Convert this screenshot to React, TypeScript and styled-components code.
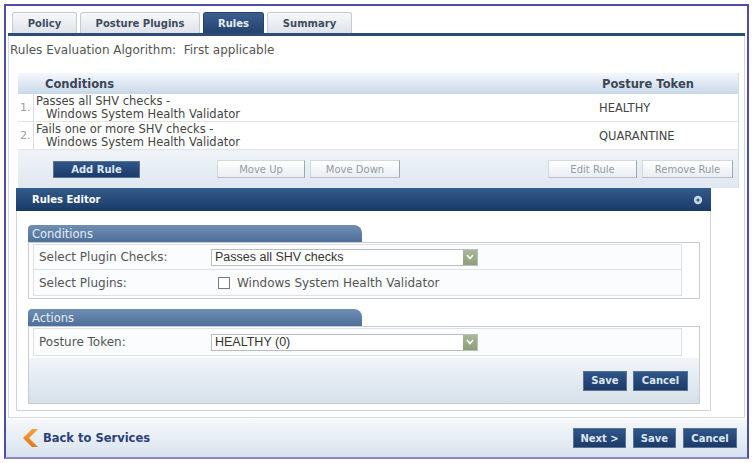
import styled, { createGlobalStyle } from "styled-components";

const GlobalStyle = createGlobalStyle`
  html, body {
    margin: 0;
    padding: 0;
    background: #ffffff;
  }
  body {
    font-family: "DejaVu Sans", Verdana, sans-serif;
    color: #444;
  }
`;

const Frame = styled.div`
  box-sizing: border-box;
  margin: 4px 0 0 4px;
  width: 745px;
  height: 455px;
  border: 2px solid #4e4eaa;
  border-bottom-color: #8a88c8;
  display: flex;
  flex-direction: column;
`;

const TabBar = styled.div`
  display: flex;
  gap: 3px;
  margin: 0 2px;
  padding: 6px 0 0 4px;
  border-bottom: 3px solid #2d4c76;
`;

const Tab = styled.div<{ $active?: boolean; $w: number }>`
  width: ${(p) => p.$w}px;
  height: 21px;
  box-sizing: border-box;
  display: flex;
  align-items: center;
  justify-content: center;
  font-size: 10px;
  font-weight: bold;
  border: 1px solid ${(p) => (p.$active ? "#24436d" : "#c6ccd4")};
  border-bottom: none;
  border-radius: 3px 3px 0 0;
  color: ${(p) => (p.$active ? "#e6eef8" : "#3e4c5e")};
  background: ${(p) =>
    p.$active
      ? "linear-gradient(#3a5f8f, #24436d)"
      : "linear-gradient(#f7f8fa, #dfe4ea)"};
`;

const Content = styled.div`
  margin: 0 2px;
  height: 382px;
  box-sizing: border-box;
  border: 1px solid #d3d9e0;
  border-top: none;
  padding: 6px 0 0 0;
  display: flex;
  flex-direction: column;
`;

const AlgoLine = styled.div`
  font-size: 12px;
  line-height: 16px;
  color: #555;
  padding-left: 1px;
`;

const Table = styled.div`
  margin: 15px 0 0 9px;
  width: 720px;
  border-right: 1px solid #d6dce4;
  display: flex;
  flex-direction: column;
`;

const HeadRow = styled.div`
  height: 21px;
  display: flex;
  align-items: center;
  background: linear-gradient(#f4f8fc, #c8d8ea);
  font-size: 11.5px;
  font-weight: bold;
  color: #3c4656;
`;

const HeadCell = styled.div<{ $w?: number }>`
  ${(p) => (p.$w ? `width: ${p.$w}px;` : "flex: 1;")}
  box-sizing: border-box;
`;

const Row = styled.div`
  height: 27px;
  display: flex;
  align-items: center;
  border-bottom: 1px solid #e1e5ea;
  font-size: 11.5px;
  color: #444;
`;

const NumCell = styled.div`
  width: 16px;
  height: 100%;
  box-sizing: border-box;
  border-right: 1px solid #d8dde3;
  display: flex;
  align-items: center;
  padding-left: 2px;
  font-size: 11px;
  color: #9aa0a8;
`;

const CondCell = styled.div`
  width: 563px;
  padding-left: 2px;
  line-height: 12.5px;
`;

const Indent = styled.div`
  padding-left: 10px;
`;

const TokenCell = styled.div`
  flex: 1;
  font-size: 11.5px;
`;

const ButtonBar = styled.div`
  height: 38px;
  display: flex;
  align-items: center;
  padding: 0 5px 0 35px;
  background: linear-gradient(#f0f4f8, #dfe7f0);
`;

const Spacer = styled.div`
  flex: 1;
`;

const LightButton = styled.div<{ $w: number; $ml?: number }>`
  width: ${(p) => p.$w}px;
  margin-left: ${(p) => p.$ml ?? 0}px;
  height: 18px;
  box-sizing: border-box;
  display: flex;
  align-items: center;
  justify-content: center;
  font-size: 10px;
  color: #959ba3;
  background: linear-gradient(#ffffff, #e9eef3);
  border: 1px solid #d2d8de;
  border-right-color: #9ea6ae;
  border-bottom-color: #b4bcc4;
`;

const DarkButton = styled.div<{ $w: number; $h?: number; $ml?: number }>`
  width: ${(p) => p.$w}px;
  height: ${(p) => p.$h ?? 20}px;
  margin-left: ${(p) => p.$ml ?? 0}px;
  box-sizing: border-box;
  display: flex;
  align-items: center;
  justify-content: center;
  font-size: 10px;
  font-weight: bold;
  color: #dde7f4;
  background: linear-gradient(#2f5688, #1c3a68);
  border: 1px solid #5a7499;
`;

const Editor = styled.div`
  margin-left: 7px;
  width: 695px;
  display: flex;
  flex-direction: column;
`;

const EditorHead = styled.div`
  height: 23px;
  display: flex;
  align-items: center;
  justify-content: space-between;
  padding: 0 8px 0 16px;
  background: linear-gradient(#335b8c, #1a3a66);
  color: #ffffff;
  font-size: 10px;
  font-weight: bold;
`;

const EditorBody = styled.div`
  height: 200px;
  box-sizing: border-box;
  border: 1px solid #cfd6de;
  border-top: none;
  padding: 14px 0 0 11px;
  display: flex;
  flex-direction: column;
`;

const SectionHead = styled.div<{ $mt?: number }>`
  width: 334px;
  height: 17px;
  margin-top: ${(p) => p.$mt ?? 0}px;
  box-sizing: border-box;
  padding-left: 4px;
  display: flex;
  align-items: center;
  font-size: 11.5px;
  color: #e4ecf6;
  background: linear-gradient(#6f8eb4, #4e6f9a);
  border-radius: 4px 8px 0 0;
`;

const SectionBox = styled.div`
  width: 672px;
  box-sizing: border-box;
  border: 1px solid #c9ccd0;
  display: flex;
  flex-direction: column;
`;

const SectionRows = styled.div`
  display: flex;
  flex-direction: column;
  padding: 1px 17px 2px 4px;
`;

const FieldRow = styled.div<{ $h?: number }>`
  height: ${(p) => p.$h ?? 26}px;
  box-sizing: border-box;
  display: flex;
  align-items: center;
  border: 1px solid #dde2e7;
  border-top: none;
  background: #fbfcfd;
  font-size: 12px;
  color: #555;
  &:first-child {
    border-top: 1px solid #dde2e7;
  }
`;

const Label = styled.div`
  width: 177px;
  padding-left: 5px;
  box-sizing: border-box;
`;

const Select = styled.div`
  width: 267px;
  height: 17px;
  box-sizing: border-box;
  border: 1px solid #b9bdc2;
  background: #ffffff;
  display: flex;
  align-items: center;
  font-family: "Liberation Sans", Arial, sans-serif;
  font-size: 12.5px;
  color: #333;
`;

const SelectText = styled.div`
  flex: 1;
  padding-left: 3px;
`;

const DropButton = styled.div`
  width: 14px;
  height: 15px;
  background: linear-gradient(#a9b896, #8c9e78);
  display: flex;
  align-items: center;
  justify-content: center;
`;

const CheckWrap = styled.label`
  display: flex;
  align-items: center;
  gap: 7px;
  padding-left: 7px;
  color: #555;
`;

const Box = styled.span`
  width: 10px;
  height: 10px;
  border: 1px solid #7c7c7c;
  background: #fff;
`;

const ActionFoot = styled.div`
  height: 45px;
  display: flex;
  align-items: center;
  justify-content: flex-end;
  gap: 6px;
  padding-right: 11px;
  background: linear-gradient(#f1f4f8, #d6e0ea);
`;

const Footer = styled.div`
  flex: 1;
  margin: 1px 0 0 0;
  display: flex;
  align-items: center;
  padding: 0 10px 0 16px;
  background: linear-gradient(#f5f8fb, #d9e3ee);
`;

const BackLink = styled.div`
  display: flex;
  align-items: center;
  gap: 5px;
  font-size: 11.5px;
  font-weight: bold;
  color: #2c417c;
`;

const FootButtons = styled.div`
  margin-left: auto;
  display: flex;
  gap: 7px;
`;

const Chevron = () => (
  <svg width="16" height="18" viewBox="0 0 16 18">
    <defs>
      <linearGradient id="og" x1="0" y1="0" x2="0" y2="1">
        <stop offset="0" stopColor="#f7a03c" />
        <stop offset="1" stopColor="#e5761a" />
      </linearGradient>
    </defs>
    <polygon points="10,0 16,0 7,9 16,18 10,18 1,9" fill="url(#og)" />
  </svg>
);

const DownArrow = () => (
  <svg width="8" height="6" viewBox="0 0 8 6">
    <polyline points="1,1 4,4.5 7,1" fill="none" stroke="#ffffff" strokeWidth="1.6" />
  </svg>
);

const GearIcon = () => (
  <svg width="10" height="10" viewBox="0 0 10 10">
    <circle cx="5" cy="5" r="4.2" fill="#c9d6e6" />
    <circle cx="5" cy="5" r="1.6" fill="#3a5f8e" />
  </svg>
);

const rules = [
  { n: "1.", a: "Passes all SHV checks -", b: "Windows System Health Validator", t: "HEALTHY" },
  { n: "2.", a: "Fails one or more SHV checks -", b: "Windows System Health Validator", t: "QUARANTINE" },
];

export default function App() {
  return (
    <>
      <GlobalStyle />
      <Frame>
        <TabBar>
          <Tab $w={65}>Policy</Tab>
          <Tab $w={120}>Posture Plugins</Tab>
          <Tab $w={61} $active>
            Rules
          </Tab>
          <Tab $w={85}>Summary</Tab>
        </TabBar>
        <Content>
          <AlgoLine>Rules Evaluation Algorithm:&nbsp; First applicable</AlgoLine>
          <Table>
            <HeadRow>
              <HeadCell $w={27} />
              <HeadCell $w={557}>Conditions</HeadCell>
              <HeadCell>Posture Token</HeadCell>
            </HeadRow>
            {rules.map((r) => (
              <Row key={r.n}>
                <NumCell>{r.n}</NumCell>
                <CondCell>
                  <div>{r.a}</div>
                  <Indent>{r.b}</Indent>
                </CondCell>
                <TokenCell>{r.t}</TokenCell>
              </Row>
            ))}
            <ButtonBar>
              <DarkButton $w={87} $h={17}>
                Add Rule
              </DarkButton>
              <LightButton $w={88} $ml={77}>
                Move Up
              </LightButton>
              <LightButton $w={90} $ml={5}>
                Move Down
              </LightButton>
              <Spacer />
              <LightButton $w={89}>Edit Rule</LightButton>
              <LightButton $w={91} $ml={5}>
                Remove Rule
              </LightButton>
            </ButtonBar>
          </Table>
          <Editor>
            <EditorHead>
              <span>Rules Editor</span>
              <GearIcon />
            </EditorHead>
            <EditorBody>
              <SectionHead>Conditions</SectionHead>
              <SectionBox>
                <SectionRows>
                  <FieldRow>
                    <Label>Select Plugin Checks:</Label>
                    <Select>
                      <SelectText>Passes all SHV checks</SelectText>
                      <DropButton>
                        <DownArrow />
                      </DropButton>
                    </Select>
                  </FieldRow>
                  <FieldRow>
                    <Label>Select Plugins:</Label>
                    <CheckWrap>
                      <Box />
                      Windows System Health Validator
                    </CheckWrap>
                  </FieldRow>
                </SectionRows>
              </SectionBox>
              <SectionHead $mt={10}>Actions</SectionHead>
              <SectionBox>
                <SectionRows>
                  <FieldRow $h={28}>
                    <Label>Posture Token:</Label>
                    <Select>
                      <SelectText>HEALTHY (0)</SelectText>
                      <DropButton>
                        <DownArrow />
                      </DropButton>
                    </Select>
                  </FieldRow>
                </SectionRows>
                <ActionFoot>
                  <DarkButton $w={44}>Save</DarkButton>
                  <DarkButton $w={55}>Cancel</DarkButton>
                </ActionFoot>
              </SectionBox>
            </EditorBody>
          </Editor>
        </Content>
        <Footer>
          <BackLink>
            <Chevron />
            Back to Services
          </BackLink>
          <FootButtons>
            <DarkButton $w={53}>Next &gt;</DarkButton>
            <DarkButton $w={43}>Save</DarkButton>
            <DarkButton $w={54}>Cancel</DarkButton>
          </FootButtons>
        </Footer>
      </Frame>
    </>
  );
}
